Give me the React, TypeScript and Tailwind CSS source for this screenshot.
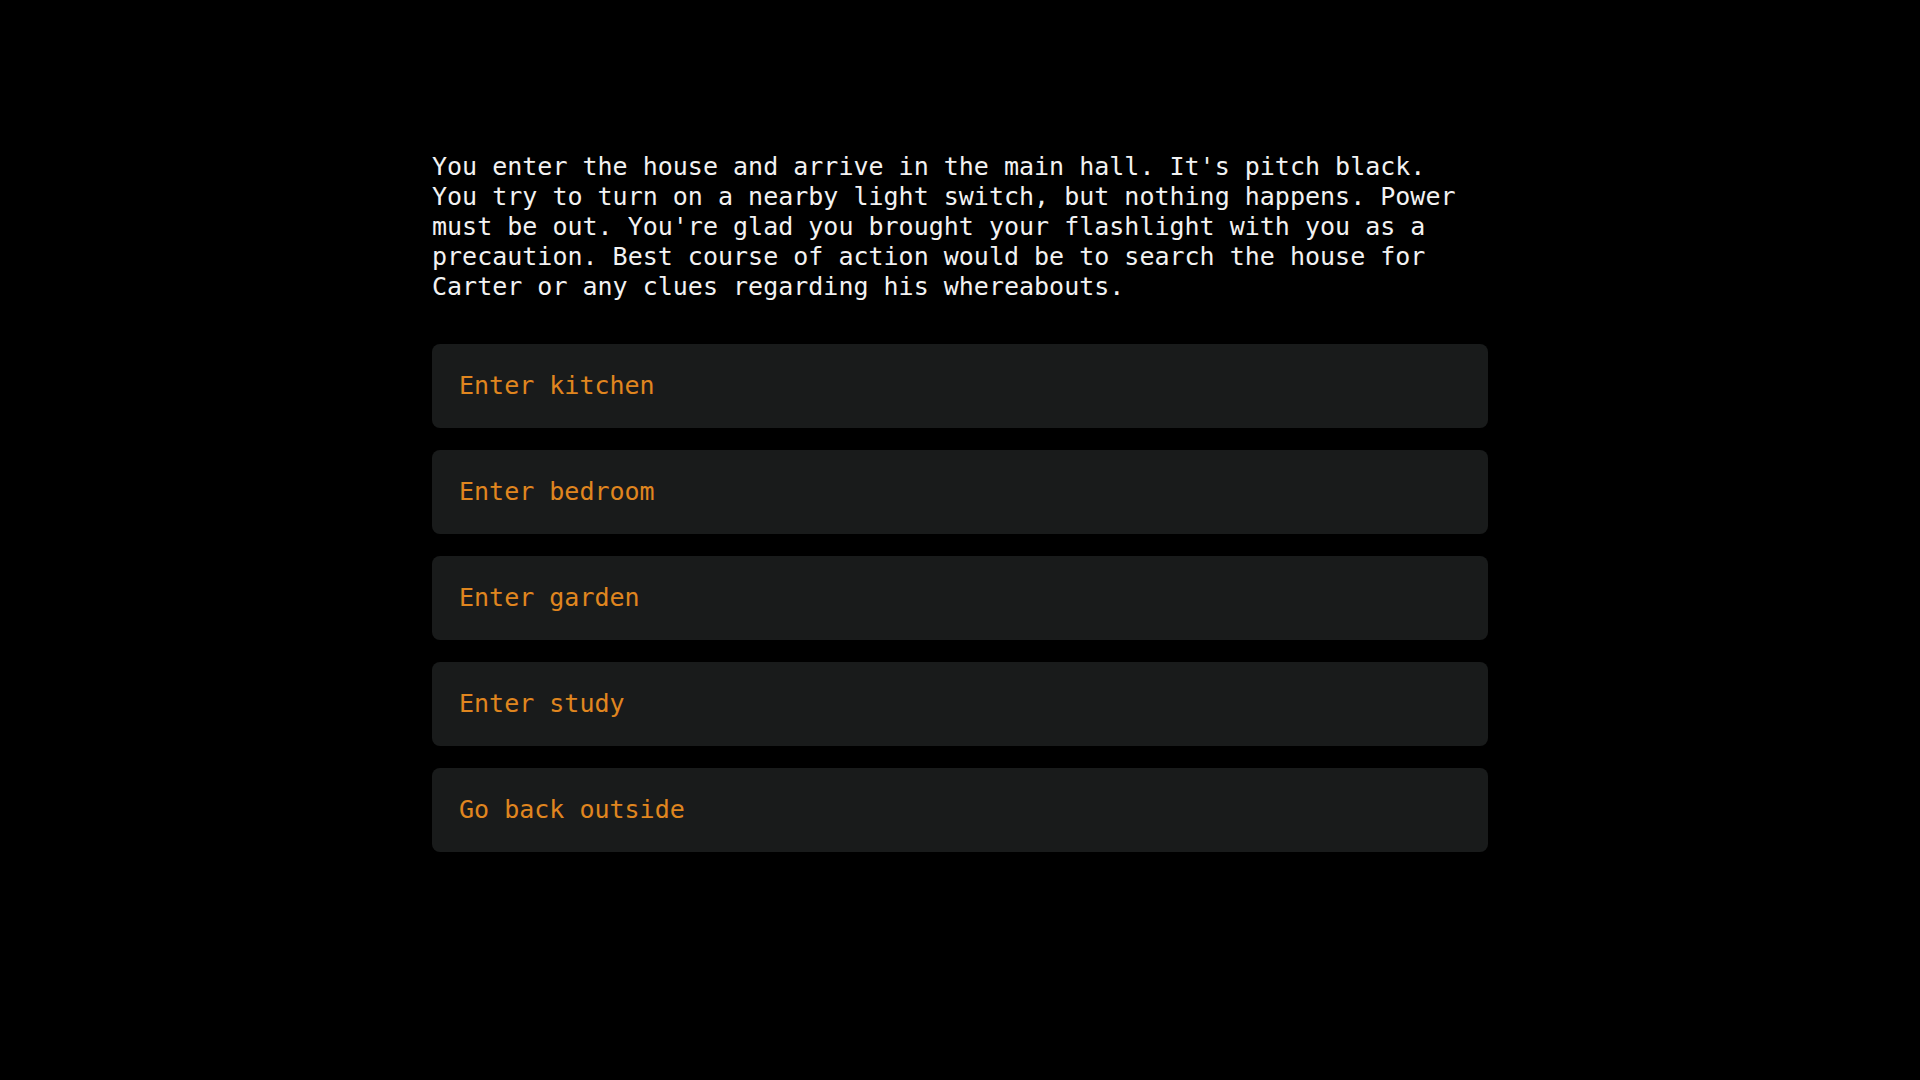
import React from "react";

const choices = [
  "Enter kitchen",
  "Enter bedroom",
  "Enter garden",
  "Enter study",
  "Go back outside",
];

const App = () => {
  return (
    <main className="min-h-screen w-full bg-black font-['DejaVu_Sans_Mono',monospace]">
      <div className="mx-auto w-[1056px] pt-[152px]">
        <p className="pr-[12px] text-[25px] leading-[30px] text-[#f2f2f2]">
          You enter the house and arrive in the main hall. It's pitch black.
          You try to turn on a nearby light switch, but nothing happens. Power
          must be out. You're glad you brought your flashlight with you as a
          precaution. Best course of action would be to search the house for
          Carter or any clues regarding his whereabouts.
        </p>

        <ul className="mt-[42px] flex flex-col gap-[22px]">
          {choices.map((c) => (
            <li key={c}>
              <button className="flex h-[84px] w-full items-center rounded-lg bg-[#191b1b] px-[27px] text-left text-[25px] text-[#e0861f]">
                {c}
              </button>
            </li>
          ))}
        </ul>
      </div>
    </main>
  );
};

export default App;
